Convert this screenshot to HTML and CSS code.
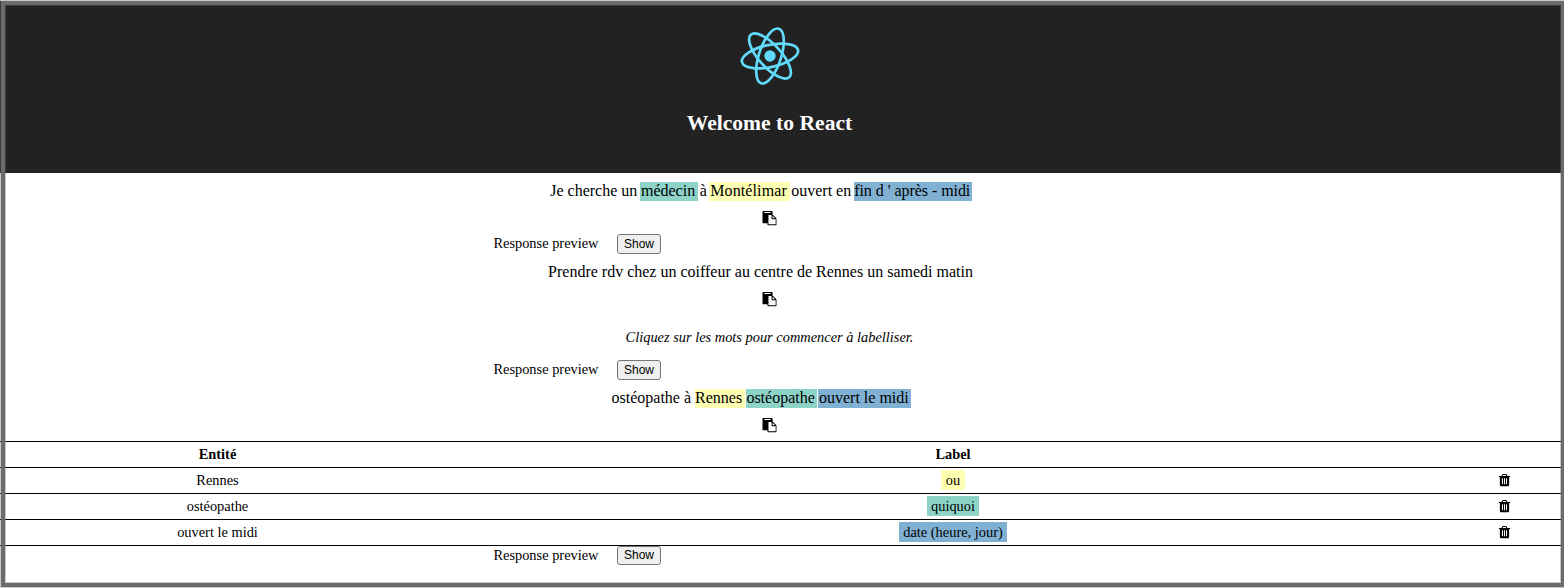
FILE: index.html
```html
<!DOCTYPE html>
<html lang="fr">
<head>
<meta charset="utf-8">
<title>React App</title>
<link rel="stylesheet" href="styles.css">
</head>
<body>
<svg class="defs" width="0" height="0">
  <symbol id="paste" viewBox="0 0 1792 1792"><path d="M768 1664h896v-640h-416q-40 0-68-28t-28-68v-416h-384v1152zm256-1440v-64q0-13-9.500-22.500t-22.500-9.500h-704q-13 0-22.500 9.500t-9.500 22.500v64q0 13 9.500 22.500t22.500 9.500h704q13 0 22.500-9.500t9.500-22.500zm256 672h299l-299-299v299zm512 128v672q0 40-28 68t-68 28h-960q-40 0-68-28t-28-68v-160h-544q-40 0-68-28t-28-68v-1344q0-40 28-68t68-28h1088q40 0 68 28t28 68v328q21 13 36 28l408 408q28 28 48 76t20 88z"/></symbol>
  <symbol id="trash" viewBox="0 0 1792 1792"><path d="M704 1376v-704q0-14-9-23t-23-9h-64q-14 0-23 9t-9 23v704q0 14 9 23t23 9h64q14 0 23-9t9-23zm256 0v-704q0-14-9-23t-23-9h-64q-14 0-23 9t-9 23v704q0 14 9 23t23 9h64q14 0 23-9t9-23zm256 0v-704q0-14-9-23t-23-9h-64q-14 0-23 9t-9 23v704q0 14 9 23t23 9h64q14 0 23-9t9-23zm-544-992h448l-48-117q-7-9-17-11h-317q-10 2-17 11zm928 32v64q0 14-9 23t-23 9h-96v948q0 83-47 143.500t-113 60.500h-832q-66 0-113-58.500t-47-141.500v-952h-96q-14 0-23-9t-9-23v-64q0-14 9-23t23-9h309l70-167q15-37 54-63t79-26h320q40 0 79 26t54 63l70 167h309q14 0 23 9t9 23z"/></symbol>
</svg>
<div class="app">
  <header class="header">
    <svg class="logo" viewBox="-12 -12 24 24">
      <circle r="2.2" fill="#61dafb"/>
      <g fill="none" stroke="#61dafb" stroke-width="1.05" transform="rotate(-12)">
        <ellipse rx="11.100" ry="4.300"/>
        <ellipse rx="11.100" ry="4.300" transform="rotate(60)"/>
        <ellipse rx="11.100" ry="4.300" transform="rotate(120)"/>
      </g>
    </svg>
    <h1 class="title">Welcome to React</h1>
  </header>

  <section class="example">
    <p class="sentence"><span>Je cherche un</span><span class="mark teal trade">médecin</span><span>à</span><span class="mark yellow place">Montélimar</span><span>ouvert en</span><span class="mark blue time">fin d ' après - midi</span></p>
    <div class="copy"><svg class="icon"><use href="#paste"/></svg></div>
    <div class="preview"><span>Response preview</span><button class="show">Show</button></div>
  </section>

  <section class="example">
    <p class="sentence plain"><span>Prendre rdv chez un coiffeur au centre de Rennes un samedi matin</span></p>
    <div class="copy"><svg class="icon"><use href="#paste"/></svg></div>
    <p class="hint">Cliquez sur les mots pour commencer à labelliser.</p>
    <div class="preview"><span>Response preview</span><button class="show">Show</button></div>
  </section>

  <section class="example">
    <p class="sentence tight"><span class="lead">ostéopathe à</span><span class="mark yellow">Rennes</span><span class="mark teal">ostéopathe</span><span class="mark blue">ouvert le midi</span></p>
    <div class="copy"><svg class="icon"><use href="#paste"/></svg></div>
    <div class="labels">
      <div class="row head"><span>Entité</span><span>Label</span><span></span></div>
      <div class="row"><span>Rennes</span><span><b class="tag yellow">ou</b></span><span><svg class="icon"><use href="#trash"/></svg></span></div>
      <div class="row"><span>ostéopathe</span><span><b class="tag teal">quiquoi</b></span><span><svg class="icon"><use href="#trash"/></svg></span></div>
      <div class="row"><span>ouvert le midi</span><span><b class="tag blue">date (heure, jour)</b></span><span><svg class="icon"><use href="#trash"/></svg></span></div>
    </div>
    <div class="preview last"><span>Response preview</span><button class="show">Show</button></div>
  </section>
</div>
<div class="frame"></div>
</body>
</html>
```
FILE: styles.css
```css
* { box-sizing: border-box; }
body {
  position: relative;
  height: 588px;
  margin: 0;
  padding-top: 1px;
  overflow: hidden;
  background: #fff;
  color: #000;
  font: 14.4px/17px "Liberation Serif", "Times New Roman", serif;
}
.defs { display: block; height: 0; }
.app { width: 1561px; }
.header {
  display: flex;
  flex-direction: column;
  align-items: center;
  height: 172px;
  padding: 24px 22px 0 0;
  background: #222;
  color: #fff;
}
.logo { width: 62px; height: 62px; }
.title { margin: 24px 0 0; font-size: 21.6px; line-height: 25px; }
.sentence {
  display: flex;
  justify-content: center;
  gap: 2.5px;
  height: 37px;
  margin: 0;
  padding: 9px 39px 0 0;
  font-size: 16px;
  line-height: 17px;
  white-space: pre;
}
.plain { padding-right: 40px; }
.tight { gap: 1px; padding-right: 38px; }
.lead { margin-right: 2.5px; }
.mark { height: 19px; padding: 0 2.700px 0 .5px; }
.trade { margin: 0 -.5px 0 .7px; }
.place { margin-right: -.8px; letter-spacing: .1px; padding-left: .8px; }
.time { padding-right: 1.500px; letter-spacing: -.05px; }
.teal { background: #8dd3c7; }
.yellow { background: #ffffb3; }
.blue { background: #80b1d3; }
.copy { height: 24px; padding-right: 22px; text-align: center; }
.icon {
  display: inline-block;
  width: 14.4px;
  height: 14.4px;
  margin-top: 1px;
  overflow: visible;
  vertical-align: top;
  transform: translateX(.3px);
}
.hint { height: 45px; margin: 0; padding: 14px 22px 0 0; text-align: center; font-style: italic; }
.preview { display: flex; gap: 18.5px; height: 20px; padding-left: 493.4px; line-height: 18px; }
.show {
  width: 44px;
  height: 20px;
  padding: 0;
  border: 1px solid #767676;
  border-radius: 3px;
  background: #efefef;
  color: #000;
  font: 12px/17px "Liberation Sans", Arial, sans-serif;
}
.last .show { height: 19px; padding-bottom: 1px; line-height: 15px; }
.labels { border-top: 1px solid #000; }
.row {
  display: grid;
  grid-template-columns: 435px 1036px 67px;
  height: 26px;
  padding-top: 2px;
  border-bottom: 1px solid #000;
  text-align: center;
  line-height: 20px;
}
.head { font-weight: bold; }
.row .icon { margin-top: 3px; }
.tag { display: inline-block; height: 20px; padding: 0 4.500px; font-weight: normal; }
.frame {
  position: absolute;
  top: 1px;
  right: -1px;
  bottom: 1px;
  left: 1px;
  border: 4px solid #6a6b6a;
  box-shadow: 0 0 0 1px rgba(107, 107, 107, .37), inset 0 0 0 1px rgba(107, 107, 107, .37);
}
```
